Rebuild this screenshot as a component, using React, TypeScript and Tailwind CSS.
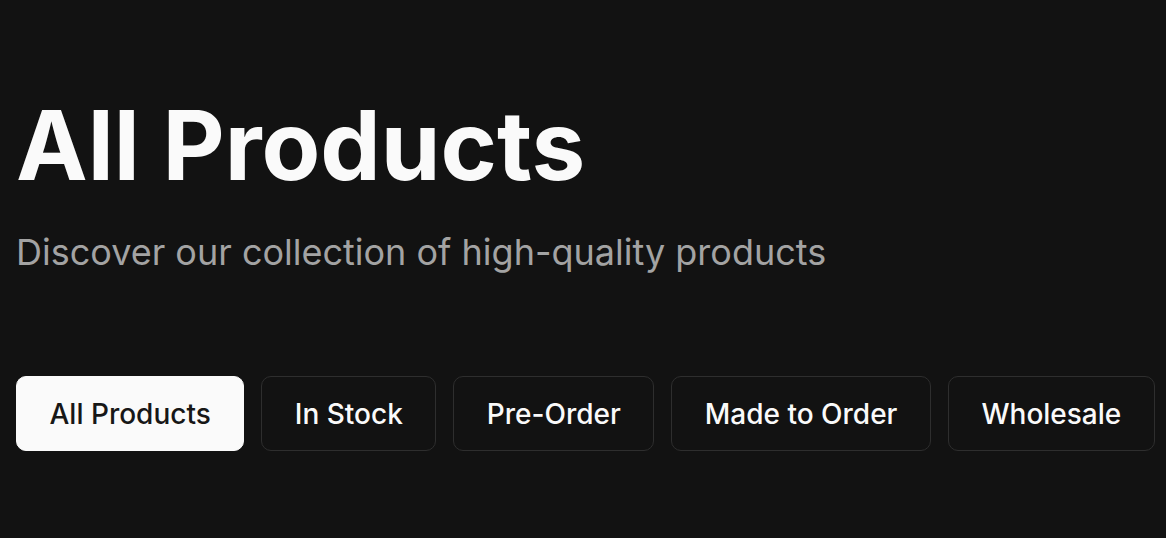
import React, { useState } from 'react';

const filters = ['All Products', 'In Stock', 'Pre-Order', 'Made to Order', 'Wholesale'];

const App: React.FC = () => {
  const [active, setActive] = useState('All Products');

  return (
    <div className="min-h-[538px] w-full overflow-hidden bg-[#121212] px-4 pt-[97px] font-['Inter',sans-serif] text-[#fafafa]">
      <h1 className="text-[96px] font-bold leading-[96px]">All Products</h1>
      <p className="mt-[39px] text-[36px] leading-[40px] text-[#a3a3a3]">
        Discover our collection of high-quality products
      </p>

      <div className="mt-[104px] flex gap-[17px]">
        {filters.map((f) => (
          <button
            key={f}
            onClick={() => setActive(f)}
            className={`flex h-[75px] shrink-0 items-center whitespace-nowrap rounded-[10px] border px-[32.5px] text-[28px] font-medium ${
              active === f
                ? 'border-[#fafafa] bg-[#fafafa] text-[#171717]'
                : 'border-[#2e2e2e] bg-[#121212] text-[#fafafa]'
            }`}
          >
            {f}
          </button>
        ))}
      </div>
    </div>
  );
};

export default App;
